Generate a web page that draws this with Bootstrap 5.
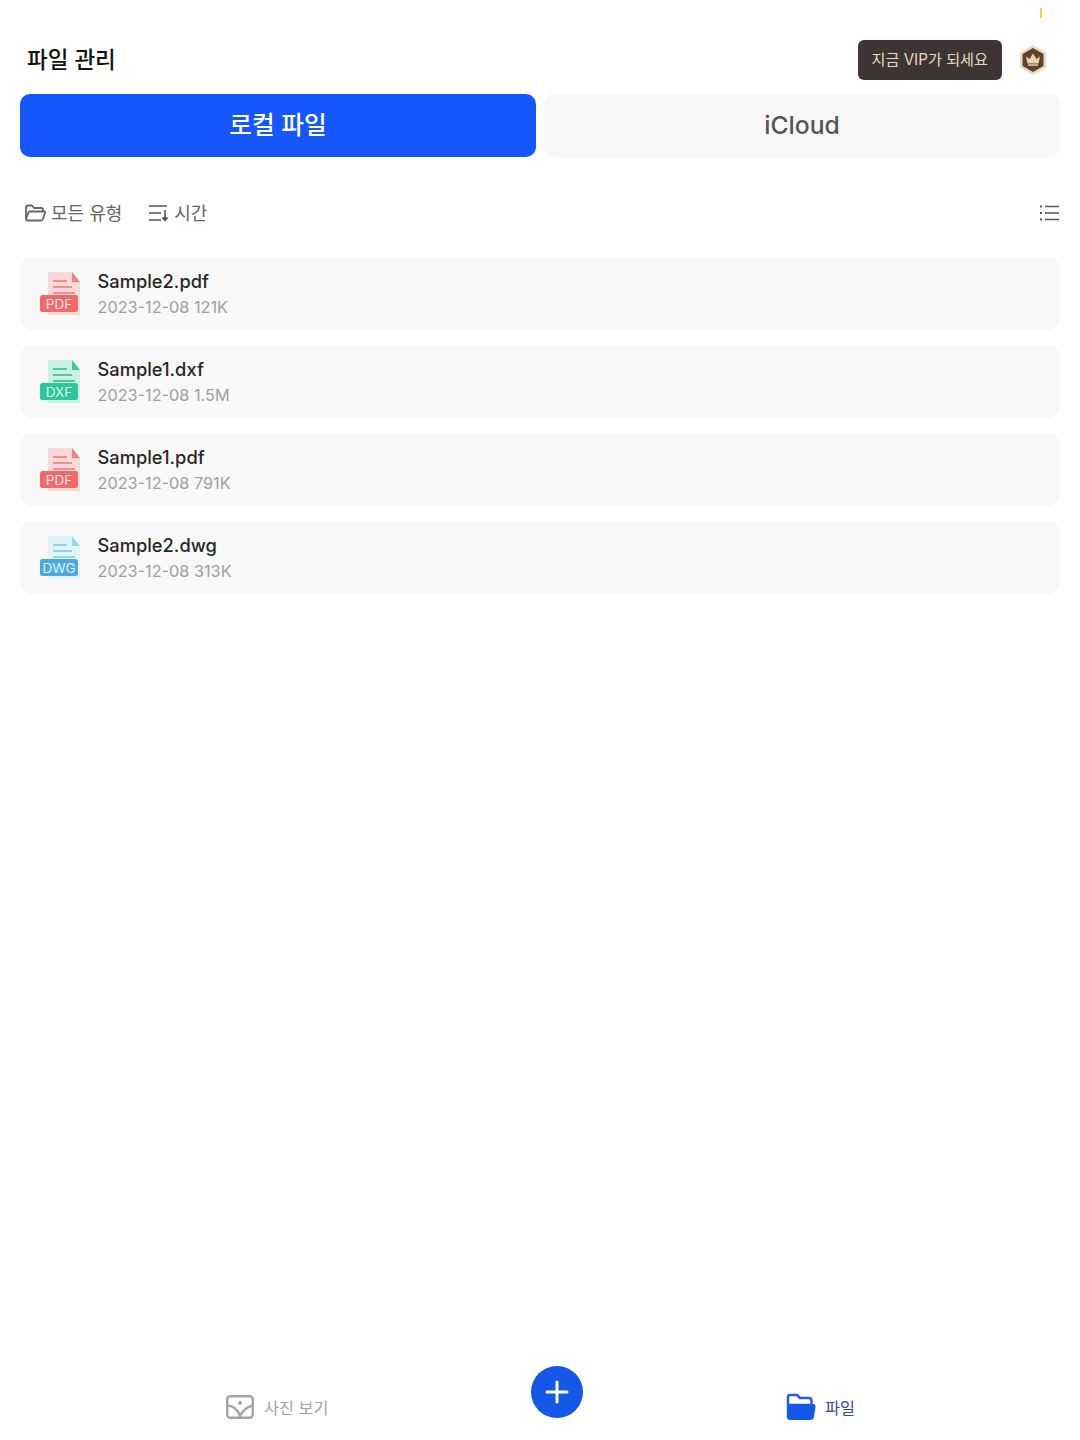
<!DOCTYPE html>
<html lang="ko">
<head>
    <meta charset="UTF-8">
    <title>파일 관리</title>
    <link href="https://cdn.jsdelivr.net/npm/bootstrap@5.3.0/dist/css/bootstrap.min.css" rel="stylesheet">
    <style>
        body {
            background: #fff;
            font-family: Inter, "Noto Sans CJK KR", sans-serif;
            color: #222;
        }

        .app-page {
            height: 1440px;
            padding: 0 20px;
        }

        .top-strip {
            height: 40px;
            padding: 8px 18px 0 0;
        }

        .strip-mark {
            width: 2px;
            height: 10px;
            background: #f4d43c;
        }

        .head-row {
            height: 53.5px;
            padding-left: 7px;
        }

        .page-title {
            font-size: 22.5px;
            font-weight: 500;
            line-height: 40px;
            color: #111;
            margin: 0;
        }

        .vip-btn {
            width: 144.5px;
            height: 40px;
            padding: 0;
            border: 0;
            border-radius: 6px;
            background: #3d3433;
            color: #ecd9bd;
            font-size: 15.2px;
            margin-right: 16px;
        }

        .vip-icon {
            margin: 3px 12px 0 0;
        }

        .tab-row {
            gap: 8px;
        }

        .tab-item {
            flex: 1;
            height: 63.5px;
            border: 0;
            border-radius: 10px;
            font-size: 24.7px;
            font-weight: 500;
            padding: 0;
        }

        .tab-on {
            background: #1557fb;
            color: #fff;
        }

        .tab-off {
            background: #f8f8f8;
            color: #555;
        }

        .filter-row {
            height: 24px;
            margin: 44px 0 32px;
            padding: 0 1px 0 5px;
            color: #666;
            font-size: 18px;
        }

        .filter-label {
            margin-left: 5px;
        }

        .sort-icon {
            margin-left: 26px;
        }

        .file-list {
            gap: 15px;
        }

        .file-row {
            height: 73px;
            background: #f8f8f8;
            border-radius: 12px;
            padding-left: 19px;
            gap: 16.5px;
        }

        .file-text {
            padding-bottom: 1px;
        }

        .file-name {
            font-size: 18.3px;
            font-weight: 500;
            line-height: 24px;
            color: #272727;
        }

        .file-meta {
            font-size: 16.25px;
            line-height: 22px;
            margin-top: 3px;
            color: #a0a0a0;
        }

        .bottom-nav {
            height: 74px;
            margin-top: auto;
            font-size: 16.3px;
        }

        .nav-side {
            gap: 10px;
            padding-top: 8px;
            flex-shrink: 0;
        }

        .nav-side span {
            padding-top: 2px;
        }

        .nav-photo {
            width: 140px;
            margin-left: 206px;
            color: #a5a5a5;
        }

        .nav-files {
            width: 70px;
            color: #3a4a9a;
            gap: 9px;
        }

        .add-btn {
            width: 52px;
            height: 52px;
            padding: 0;
            border: 0;
            flex-shrink: 0;
            margin: 0 203px 22px 165px;
            background: #1557e8;
        }
    </style>
</head>
<body class="m-0">
    <div class="app-page d-flex flex-column">
        <div class="top-strip d-flex justify-content-end">
            <div class="strip-mark"></div>
        </div>

        <div class="head-row d-flex align-items-start">
            <h1 class="page-title flex-grow-1">파일 관리</h1>
            <button class="vip-btn" type="button">지금 VIP가 되세요</button>
            <svg class="vip-icon" width="30" height="34" viewBox="0 0 30 34">
                <path d="M15 2 28 9.500v15L15 32 2 24.500v-15z" fill="#eedcc2"/>
                <path d="M15 5 25.500 11v12L15 29 4.500 23V11z" fill="#5e4330"/>
                <path d="M8 13.500 11.500 16 15 10.500 18.500 16 22 13.500 20.500 20.500H9.500z" fill="#ecd3ab"/>
                <path d="M10 22H20" stroke="#ecd3ab" stroke-width="1.500"/>
            </svg>
        </div>

        <div class="tab-row d-flex">
            <button class="tab-item tab-on" type="button">로컬 파일</button>
            <button class="tab-item tab-off" type="button">iCloud</button>
        </div>

        <div class="filter-row d-flex align-items-center">
            <svg width="21" height="18" viewBox="0 0 21 18" fill="none" stroke="#666" stroke-width="1.800" stroke-linejoin="round">
                <path d="M1 15V3.500Q1 1.500 3 1.500H7L9 4H16Q18 4 18 6V7.500"/>
                <path d="M1 15 3.500 8.500Q4 7.500 5 7.500H19Q20.500 7.500 20 9L18 15Q17.500 16.500 16 16.500H2.500Q1 16.500 1 15Z"/>
            </svg>
            <span class="filter-label">모든 유형</span>
            <svg class="sort-icon" width="22" height="18" viewBox="0 0 22 18" fill="none" stroke="#555" stroke-width="1.600">
                <path d="M1 2H19M1 9H13M1 16H13M17 6V16"/>
                <path d="M14.500 13.500 17 16.500 19.500 13.500" fill="#555"/>
            </svg>
            <span class="ms-1">시간</span>
            <svg class="ms-auto" width="19" height="16" viewBox="0 0 19 16" fill="none" stroke="#555" stroke-width="1.500">
                <path d="M5 1.500H19M5 8H19M5 14.500H19"/>
                <path d="M0 1.500H2M0 8H2M0 14.500H2" stroke-width="2.200"/>
            </svg>
        </div>

        <div class="file-list d-flex flex-column">
            <div class="file-row d-flex align-items-center">
                <svg width="42" height="44" viewBox="0 0 42 44">
                    <path d="M9 0H33L41 10V43H9z" fill="#fbd9d9"/>
                    <path d="M33 0 41 10H33z" fill="#e98484"/>
                    <path d="M14 9H28M14 15H33M14 21H36" stroke="#ef8f8f" stroke-width="2"/>
                    <rect x="1" y="23" width="38" height="17" rx="2.500" fill="#f06a6a"/>
                    <text x="20" y="36.500" text-anchor="middle" font-family="Inter, sans-serif" font-size="13.500" fill="#ffe0e0">PDF</text>
                </svg>
                <div class="file-text">
                    <div class="file-name">Sample2.pdf</div>
                    <div class="file-meta">2023-12-08 121K</div>
                </div>
            </div>
            <div class="file-row d-flex align-items-center">
                <svg width="42" height="44" viewBox="0 0 42 44">
                    <path d="M9 0H33L41 10V43H9z" fill="#c8f3e4"/>
                    <path d="M33 0 41 10H33z" fill="#45c79c"/>
                    <path d="M14 9H28M14 15H33M14 21H36" stroke="#4dc9a0" stroke-width="2"/>
                    <rect x="1" y="23" width="38" height="17" rx="2.500" fill="#2fc597"/>
                    <text x="20" y="36.500" text-anchor="middle" font-family="Inter, sans-serif" font-size="13.500" fill="#d8fff0">DXF</text>
                </svg>
                <div class="file-text">
                    <div class="file-name">Sample1.dxf</div>
                    <div class="file-meta">2023-12-08 1.5M</div>
                </div>
            </div>
            <div class="file-row d-flex align-items-center">
                <svg width="42" height="44" viewBox="0 0 42 44">
                    <path d="M9 0H33L41 10V43H9z" fill="#fbd9d9"/>
                    <path d="M33 0 41 10H33z" fill="#e98484"/>
                    <path d="M14 9H28M14 15H33M14 21H36" stroke="#ef8f8f" stroke-width="2"/>
                    <rect x="1" y="23" width="38" height="17" rx="2.500" fill="#f06a6a"/>
                    <text x="20" y="36.500" text-anchor="middle" font-family="Inter, sans-serif" font-size="13.500" fill="#ffe0e0">PDF</text>
                </svg>
                <div class="file-text">
                    <div class="file-name">Sample1.pdf</div>
                    <div class="file-meta">2023-12-08 791K</div>
                </div>
            </div>
            <div class="file-row d-flex align-items-center">
                <svg width="42" height="44" viewBox="0 0 42 44">
                    <path d="M9 0H33L41 10V43H9z" fill="#e0f5fb"/>
                    <path d="M33 0 41 10H33z" fill="#9ed6e8"/>
                    <path d="M14 9H28M14 15H33M14 21H36" stroke="#8ed5ea" stroke-width="2"/>
                    <rect x="1" y="23" width="38" height="17" rx="2.500" fill="#4fa9dc"/>
                    <text x="20" y="36.500" text-anchor="middle" font-family="Inter, sans-serif" font-size="13.500" fill="#dcf4ff">DWG</text>
                </svg>
                <div class="file-text">
                    <div class="file-name">Sample2.dwg</div>
                    <div class="file-meta">2023-12-08 313K</div>
                </div>
            </div>
        </div>

        <div class="bottom-nav d-flex align-items-center">
            <div class="nav-side nav-photo d-flex align-items-center">
                <svg width="28" height="24" viewBox="0 0 28 24" fill="none" stroke="#a5a5a5" stroke-width="2.400">
                    <rect x="1.200" y="1.200" width="25.600" height="21.600" rx="3"/>
                    <path d="M1 10.500Q10 10.500 14 21Q18 12.500 27 10.500"/>
                    <circle cx="14" cy="8" r="2" fill="#a5a5a5" stroke="none"/>
                </svg>
                <span>사진 보기</span>
            </div>
            <button class="add-btn rounded-circle d-flex align-items-center justify-content-center" type="button">
                <svg width="24" height="24" viewBox="0 0 24 24" stroke="#fff" stroke-width="3" stroke-linecap="round">
                    <path d="M12 2V22M2 12H22"/>
                </svg>
            </button>
            <div class="nav-side nav-files d-flex align-items-center">
                <svg class="flex-shrink-0" width="30" height="28" viewBox="0 0 30 28">
                    <path d="M2 24V4Q2 2 4 2H11L14 5H23Q25.500 5 25.500 8V12H2z" fill="#fff" stroke="#1f5fe0" stroke-width="2.500"/>
                    <path d="M1 24 2.500 13Q3 11 5.500 11H27Q30 11 29.500 14L28 24Q27.500 27 24 27H4Q1 27 1 24Z" fill="#1557e8"/>
                </svg>
                <span>파일</span>
            </div>
        </div>
    </div>
</body>
</html>
